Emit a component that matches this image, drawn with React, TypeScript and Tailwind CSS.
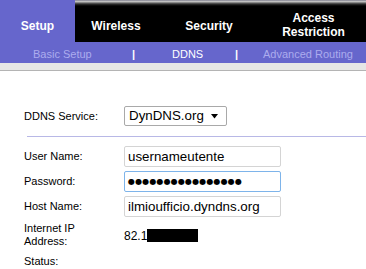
import React from "react";

const font = { fontFamily: '"Liberation Sans", Arial, sans-serif' };

function Field({ children, focused }: { children: React.ReactNode; focused?: boolean }) {
  return (
    <div
      className={
        "flex h-[21px] w-[157px] items-center rounded-[2px] border bg-white pl-[3px] text-[13.33px] leading-none text-black " +
        (focused ? "border-[#7eb4ea]" : "border-[#d4d4d4]")
      }
    >
      {children}
    </div>
  );
}

function Row({ label, children, h = "h-[21px]" }: { label: React.ReactNode; children?: React.ReactNode; h?: string }) {
  return (
    <div className={"flex items-center " + h}>
      <div className="w-[100px] text-[11px] leading-[13px] text-black">{label}</div>
      <div>{children}</div>
    </div>
  );
}

const strip =
  "h-[6px] bg-[linear-gradient(to_bottom,#55556a_0px,#d8d8d8_1px,#a8a8a8_2px,#6a6a6a_3px,#303030_4px,#000_6px)]";

export default function App() {
  return (
    <div className="h-[269px] w-[366px] overflow-hidden bg-white" style={font}>
      {/* Header tabs */}
      <div className="grid h-[42px] grid-cols-[75px_82px_104px_105px] bg-black text-[12px] font-bold text-white">
        <div className="flex items-center justify-center bg-[#6666cc] pt-[10px]">Setup</div>
        <div className="flex flex-col">
          <div className={strip} />
          <div className="flex flex-1 items-center justify-center pt-[4px]">Wireless</div>
        </div>
        <div className="flex flex-col">
          <div className={strip} />
          <div className="flex flex-1 items-center justify-center pt-[4px]">Security</div>
        </div>
        <div className="flex flex-col">
          <div className={strip} />
          <div className="flex flex-1 flex-col items-center justify-center pt-[2px] text-center leading-[14px]">
            <span>Access</span>
            <span>Restriction</span>
          </div>
        </div>
      </div>
      {/* Sub nav */}
      <div className="relative h-[21px] bg-[#6666cc] text-[11px]">
        <span className="absolute left-[33px] top-[4px] text-[#acacee]">Basic Setup</span>
        <span className="absolute left-[132px] top-[4px] font-bold text-white">|</span>
        <span className="absolute left-[172px] top-[4px] text-white">DDNS</span>
        <span className="absolute left-[235px] top-[4px] font-bold text-white">|</span>
        <span className="absolute left-[263px] top-[4px] text-[#acacee]">Advanced Routing</span>
      </div>
      <div className="h-[7px] bg-[#e6e6e6]" />
      <div className="h-[1px] bg-[#b4b4b4]" />

      {/* Content */}
      <div className="pl-[24px] pt-[35px]">
        <div className="flex h-[20px] items-center">
          <div className="w-[100px] text-[11px] text-black">DDNS Service:</div>
          <div className="flex h-[20px] w-[103px] items-center justify-between rounded-[2px] border border-[#a9a9a9] bg-white pl-[4px] pr-[7px] text-[13.33px] text-black">
            <span>DynDNS.org</span>
            <svg width="8" height="5" viewBox="0 0 8 5">
              <path d="M0 0h7L3.5 4.5z" fill="#000" />
            </svg>
          </div>
        </div>
      </div>
      <div className="ml-[27px] mt-[10px] h-[1px] bg-[#b8b8e6]" />
      <div className="flex flex-col gap-[4px] pl-[24px] pt-[9px]">
        <Row label="User Name:">
          <Field>usernameutente</Field>
        </Row>
        <Row label="Password:">
          <Field focused>
            <span className="text-[8px] tracking-[0.15px]" style={{ fontFamily: '"DejaVu Sans", sans-serif' }}>
              ●●●●●●●●●●●●●●●●
            </span>
          </Field>
        </Row>
        <Row label="Host Name:">
          <Field>ilmioufficio.dyndns.org</Field>
        </Row>
        <Row
          h="h-[28px]"
          label={
            <>
              Internet IP
              <br />
              Address:
            </>
          }
        >
          <div className="flex items-center pt-[1px] text-[12px] text-black">
            <span>82.1</span>
            <span className="inline-block h-[13px] w-[51px] bg-black" />
          </div>
        </Row>
        <div className="text-[11px] text-black">Status:</div>
      </div>
    </div>
  );
}
